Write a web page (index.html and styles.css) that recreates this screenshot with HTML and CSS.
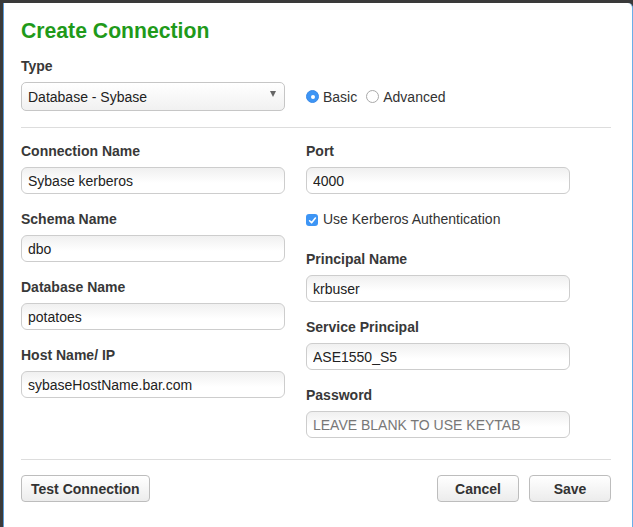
FILE: index.html
```html
<!DOCTYPE html>
<html>
<head>
<meta charset="utf-8">
<link rel="stylesheet" href="styles.css">
</head>
<body>
<div class="dialog">
  <h1 class="title">Create Connection</h1>
  <div class="label">Type</div>
  <div class="type-row">
    <div class="select">
      <span class="select-text">Database - Sybase</span>
      <span class="select-arrow"></span>
    </div>
    <div class="radios">
      <label class="radio-item"><span class="radio checked"></span>Basic</label>
      <label class="radio-item"><span class="radio"></span>Advanced</label>
    </div>
  </div>
  <div class="rule rule-top"></div>
  <div class="grid">
    <div class="col">
      <div class="field">
        <div class="label">Connection Name</div>
        <input class="input" type="text" value="Sybase kerberos">
      </div>
      <div class="field">
        <div class="label">Schema Name</div>
        <input class="input" type="text" value="dbo">
      </div>
      <div class="field">
        <div class="label">Database Name</div>
        <input class="input" type="text" value="potatoes">
      </div>
      <div class="field">
        <div class="label">Host Name/ IP</div>
        <input class="input" type="text" value="sybaseHostName.bar.com">
      </div>
    </div>
    <div class="col">
      <div class="field">
        <div class="label">Port</div>
        <input class="input" type="text" value="4000">
      </div>
      <label class="check-row">
        <span class="checkbox"><svg width="9" height="9" viewBox="0 0 9 9"><path d="M1.6 4.8 L3.6 6.8 L7.4 2" fill="none" stroke="#fff" stroke-width="1.6" stroke-linecap="round" stroke-linejoin="round"/></svg></span>
        Use Kerberos Authentication
      </label>
      <div class="field">
        <div class="label">Principal Name</div>
        <input class="input" type="text" value="krbuser">
      </div>
      <div class="field">
        <div class="label">Service Principal</div>
        <input class="input" type="text" value="ASE1550_S5">
      </div>
      <div class="field">
        <div class="label">Password</div>
        <input class="input" type="password" placeholder="LEAVE BLANK TO USE KEYTAB">
      </div>
    </div>
  </div>
  <div class="rule rule-bottom"></div>
  <div class="footer">
    <button class="btn">Test Connection</button>
    <div class="footer-right">
      <button class="btn btn-fixed">Cancel</button>
      <button class="btn btn-fixed">Save</button>
    </div>
  </div>
</div>
</body>
</html>
```
FILE: styles.css
```css
html, body {
  margin: 0;
  padding: 0;
  background: #3a3a3a;
  height: 100%;
  overflow: hidden;
}
body {
  font-family: "Liberation Sans", Arial, sans-serif;
  font-size: 14px;
  color: #333;
}
.dialog {
  margin: 3px 0 0 3px;
  width: 630px;
  height: 524px;
  background: #fff;
  border-left: 1px solid #5b9bd8;
  border-right: 1px solid #6aaee8;
  border-top-right-radius: 5px;
  padding: 16px 21px 0 17px;
  box-sizing: border-box;
}
.title {
  margin: 0 0 14px 0;
  font-size: 21.2px;
  line-height: 24px;
  font-weight: bold;
  color: #1f9a1a;
}
.label {
  font-weight: bold;
  line-height: 18px;
  color: #383838;
  margin-bottom: 7px;
}
.type-row {
  display: flex;
  align-items: center;
  gap: 21px;
}
.select {
  width: 264px;
  height: 29px;
  box-sizing: border-box;
  border: 1px solid #c6c6c6;
  border-radius: 5px;
  background: linear-gradient(#ffffff, #f1f1f1);
  display: flex;
  align-items: center;
  justify-content: space-between;
  padding: 0 8px 0 6px;
  color: #222;
}
.select-arrow {
  width: 0;
  height: 0;
  border-left: 3.5px solid transparent;
  border-right: 3.5px solid transparent;
  border-top: 6px solid #666;
  margin-top: -6px;
}
.radios {
  display: flex;
  align-items: center;
  gap: 9px;
}
.radio-item {
  display: flex;
  align-items: center;
  gap: 4px;
  color: #333;
  line-height: 18px;
}
.radio {
  width: 13px;
  height: 13px;
  box-sizing: border-box;
  border-radius: 50%;
  border: 1px solid #a9a9a9;
  background: #fff;
  position: relative;
}
.radio.checked {
  background: #3d95f5;
  border-color: #3a8ae8;
}
.radio.checked::after {
  content: "";
  position: absolute;
  left: 3.5px;
  top: 3.5px;
  width: 4px;
  height: 4px;
  border-radius: 50%;
  background: #fff;
}
.rule {
  height: 1px;
  background: #dddddd;
}
.rule-top {
  margin: 16px 0 14px 0;
}
.grid {
  display: grid;
  grid-template-columns: 264px 264px;
  column-gap: 21px;
}
.col {
  display: flex;
  flex-direction: column;
}
.field {
  display: flex;
  flex-direction: column;
  margin-bottom: 16px;
}
.input {
  width: 264px;
  height: 27px;
  box-sizing: border-box;
  border: 1px solid #cdcdcd;
  border-radius: 6px;
  background: linear-gradient(#f0f0f0, #ffffff 60%);
  padding: 0 6px;
  margin: 0;
  font-family: "Liberation Sans", Arial, sans-serif;
  font-size: 14px;
  color: #222;
  outline: none;
}
.input::placeholder {
  color: #777;
}
.check-row {
  display: flex;
  align-items: center;
  gap: 5px;
  line-height: 18px;
  color: #333;
  margin: 0 0 22px 0;
  height: 18px;
}
.checkbox {
  width: 12px;
  height: 12px;
  border-radius: 3px;
  background: #3d95f5;
  display: flex;
  align-items: center;
  justify-content: center;
  margin-top: 2px;
}
.checkbox svg {
  display: block;
}
.rule-bottom {
  margin: 5px 0 15px 0;
}
.footer {
  display: flex;
  justify-content: space-between;
  align-items: center;
}
.footer-right {
  display: flex;
  gap: 10px;
}
.btn {
  height: 27px;
  box-sizing: border-box;
  border: 1px solid #bdbdbd;
  border-radius: 4px;
  background: linear-gradient(#ffffff, #ececec);
  font-family: "Liberation Sans", Arial, sans-serif;
  font-size: 14px;
  font-weight: bold;
  color: #333;
  padding: 0 9px;
  margin: 0;
}
.btn-fixed {
  width: 82px;
}
```
